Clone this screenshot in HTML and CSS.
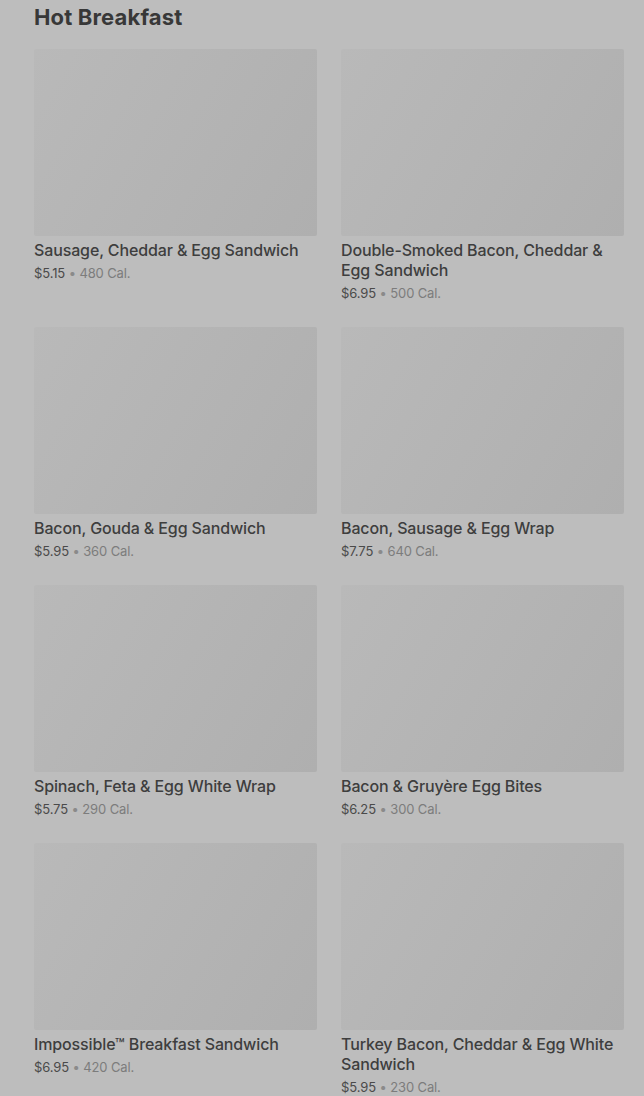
FILE: index.html
```html
<!DOCTYPE html>
<html>
<head>
<meta charset="utf-8">
<link rel="stylesheet" href="styles.css">
</head>
<body>
<main class="section">
  <h2 class="title">Hot Breakfast</h2>
  <div class="grid">
    <div class="card"><div class="thumb"></div><div class="name">Sausage, Cheddar &amp; Egg Sandwich</div><div class="meta"><span class="price">$5.15</span> • <span class="cal">480 Cal.</span></div></div>
    <div class="card"><div class="thumb"></div><div class="name">Double-Smoked Bacon, Cheddar &amp; Egg Sandwich</div><div class="meta"><span class="price">$6.95</span> • <span class="cal">500 Cal.</span></div></div>
    <div class="card"><div class="thumb"></div><div class="name">Bacon, Gouda &amp; Egg Sandwich</div><div class="meta"><span class="price">$5.95</span> • <span class="cal">360 Cal.</span></div></div>
    <div class="card"><div class="thumb"></div><div class="name">Bacon, Sausage &amp; Egg Wrap</div><div class="meta"><span class="price">$7.75</span> • <span class="cal">640 Cal.</span></div></div>
    <div class="card"><div class="thumb"></div><div class="name">Spinach, Feta &amp; Egg White Wrap</div><div class="meta"><span class="price">$5.75</span> • <span class="cal">290 Cal.</span></div></div>
    <div class="card"><div class="thumb"></div><div class="name">Bacon &amp; Gruyère Egg Bites</div><div class="meta"><span class="price">$6.25</span> • <span class="cal">300 Cal.</span></div></div>
    <div class="card"><div class="thumb"></div><div class="name">Impossible™ Breakfast Sandwich</div><div class="meta"><span class="price">$6.95</span> • <span class="cal">420 Cal.</span></div></div>
    <div class="card"><div class="thumb"></div><div class="name">Turkey Bacon, Cheddar &amp; Egg White Sandwich</div><div class="meta"><span class="price">$5.95</span> • <span class="cal">230 Cal.</span></div></div>
  </div>
</main>
</body>
</html>
```
FILE: styles.css
```css
html, body {
  margin: 0;
  padding: 0;
  background: #bdbdbd;
  font-family: Inter, "Noto Sans", sans-serif;
}
.section {
  padding: 0 20px 0 34px;
}
.title {
  margin: 0;
  padding-top: 2px;
  font-size: 22px;
  line-height: 30px;
  font-weight: 700;
  color: #383838;
  letter-spacing: 0.15px;
  margin-bottom: 17px;
}
.grid {
  display: grid;
  grid-template-columns: 1fr 1fr;
  column-gap: 24px;
  row-gap: 24px;
}
.thumb {
  height: 187px;
  border-radius: 2px;
  background: linear-gradient(120deg, #b9b9b9 0%, #b4b4b4 50%, #afafaf 100%);
}
.name {
  margin-top: 4px;
  font-size: 16px;
  line-height: 20px;
  font-weight: 500;
  color: #3e3e3e;
  letter-spacing: -0.13px;
}
.meta {
  margin-top: 3px;
  font-size: 13px;
  line-height: 20px;
  color: #8a8a8a;
  letter-spacing: -0.12px;
}
.price {
  color: #4a4a4a;
}
.cal {
  color: #7c7c7c;
}
```
